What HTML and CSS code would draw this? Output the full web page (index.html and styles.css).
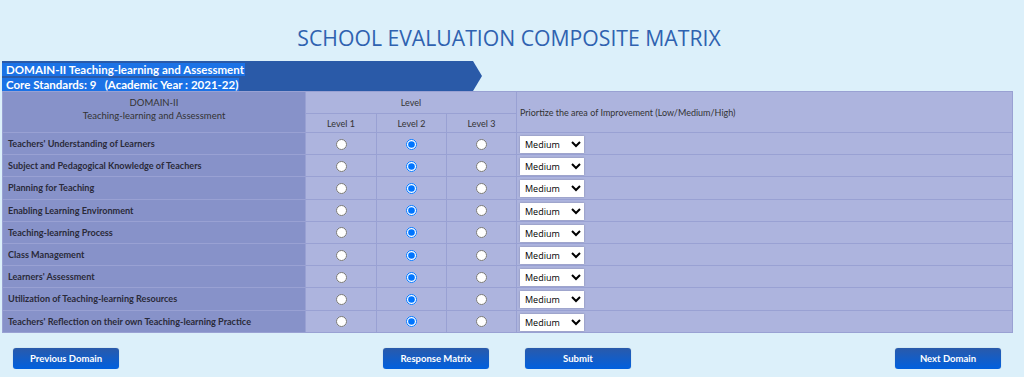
FILE: index.html
```html
<!DOCTYPE html>
<html lang="en">
<head>
    <meta charset="UTF-8">
    <meta name="viewport" content="width=device-width, initial-scale=1.0">
    <title>School Evaluation Composite Matrix</title>
    <link rel="stylesheet" href="styles.css">
</head>
<body>
    <h1 class="title">SCHOOL EVALUATION COMPOSITE MATRIX</h1>

    <div class="banner">
        <span class="banner-text">DOMAIN-II Teaching-learning and Assessment<br>Core Standards: 9 &nbsp;&nbsp;(Academic Year : 2021-22)</span>
    </div>

    <table class="matrix">
        <colgroup>
            <col class="col-std">
            <col class="col-l1">
            <col class="col-lvl">
            <col class="col-lvl">
            <col>
        </colgroup>
        <thead>
            <tr class="head-top">
                <th class="domain-head" rowspan="2">DOMAIN-II<br>Teaching-learning and Assessment</th>
                <th colspan="3">Level</th>
                <th class="prio-head" rowspan="2">Priortize the area of Improvement (Low/Medium/High)</th>
            </tr>
            <tr class="head-levels">
                <th>Level 1</th>
                <th>Level 2</th>
                <th>Level 3</th>
            </tr>
        </thead>
        <tbody id="rows"></tbody>
    </table>

    <div class="actions">
        <button class="btn">Previous Domain</button>
        <div class="actions-mid">
            <button class="btn">Response Matrix</button>
            <button class="btn">Submit</button>
        </div>
        <button class="btn">Next Domain</button>
    </div>

    <script>
        const standards = [
            "Teachers' Understanding of Learners",
            "Subject and Pedagogical Knowledge of Teachers",
            "Planning for Teaching",
            "Enabling Learning Environment",
            "Teaching-learning Process",
            "Class Management",
            "Learners' Assessment",
            "Utilization of Teaching-learning Resources",
            "Teachers' Reflection on their own Teaching-learning Practice"
        ];
        const tbody = document.getElementById('rows');

        standards.forEach((name, i) => {
            const tr = document.createElement('tr');
            let html = `<td class="std">${name}</td>`;
            for (let l = 1; l <= 3; l++) {
                html += `<td class="lvl"><input type="radio" name="std${i}" ${l === 2 ? 'checked' : ''}></td>`;
            }
            html += `<td class="prio"><select>
                <option>Low</option>
                <option selected>Medium</option>
                <option>High</option>
            </select></td>`;
            tr.innerHTML = html;
            tbody.appendChild(tr);
        });
    </script>
</body>
</html>
```

FILE: styles.css
```css
body {
    margin: 0;
    background: #dcf0fa;
    font-family: Lato, "Open Sans", sans-serif;
    color: #222;
}
.title {
    margin: 0;
    padding-top: 23px;
    height: 38px;
    text-align: center;
    font-family: "Open Sans", sans-serif;
    font-weight: 400;
    font-size: 21.2px;
    color: #2f62b0;
    padding-right: 6px;
}
.banner {
    width: 480px;
    height: 30px;
    margin-left: 2px;
    padding-top: 1px;
    box-sizing: border-box;
    background: #2a5aa8;
    font-size: 11.5px;
    line-height: 15px;
    clip-path: polygon(0 0, 471px 0, 100% 50%, 471px 100%, 0 100%);
}
.banner-text {
    background: #1b72e6;
    color: #fff;
    font-weight: 700;
    padding: 0 1px 0 4px;
    -webkit-box-decoration-break: clone;
    box-decoration-break: clone;
}
.matrix {
    margin-left: 2px;
    width: 1011px;
    border-collapse: collapse;
    table-layout: fixed;
    background: #adb4de;
    font-size: 9px;
    border: 1px solid #8c94cb;
}
.col-std {
    width: 303px;
}
.col-l1 {
    width: 71px;
}
.col-lvl {
    width: 70px;
}
.matrix th,
.matrix td {
    border: 1px solid #99a1d3;
    padding: 0;
}
.matrix th {
    font-weight: 400;
    color: #333;
}
.head-top {
    height: 22px;
}
.head-levels {
    height: 19px;
}
.domain-head {
    background: #8792c9;
    vertical-align: top;
    padding-top: 4px !important;
    line-height: 13px;
    font-size: 9.5px;
}
.prio-head {
    text-align: left;
    padding-left: 3px !important;
}
.matrix tbody tr {
    height: 22.2px;
}
.std {
    background: #8792c9;
    font-weight: 700;
    color: #2a2a3a;
    padding-left: 5px !important;
    font-size: 9.1px;
}
.lvl {
    text-align: center;
}
.lvl input {
    margin: 3px 0 0;
    width: 11px;
    height: 11px;
}
.prio {
    padding-left: 3px !important;
}
.prio select {
    width: 64px;
    height: 17px;
    font-family: "Open Sans", sans-serif;
    font-size: 9px;
    border: none;
    background: #fff;
    box-shadow: 0 0 2px rgba(0, 0, 0, 0.25);
    padding: 0 0 0 1px;
    margin-top: 2px;
    display: block;
}
.actions {
    display: flex;
    justify-content: space-between;
    align-items: center;
    margin: 15px 23px 0 13px;
}
.actions-mid {
    display: flex;
    gap: 36px;
}
.btn {
    width: 106px;
    height: 21px;
    border: none;
    border-radius: 3px;
    background: linear-gradient(#2a5aaa, #0060df);
    color: #fff;
    font-family: Lato, sans-serif;
    font-weight: 700;
    font-size: 9.5px;
    cursor: pointer;
    box-shadow: 0 0 1px rgba(0, 0, 0, 0.3);
}
```
